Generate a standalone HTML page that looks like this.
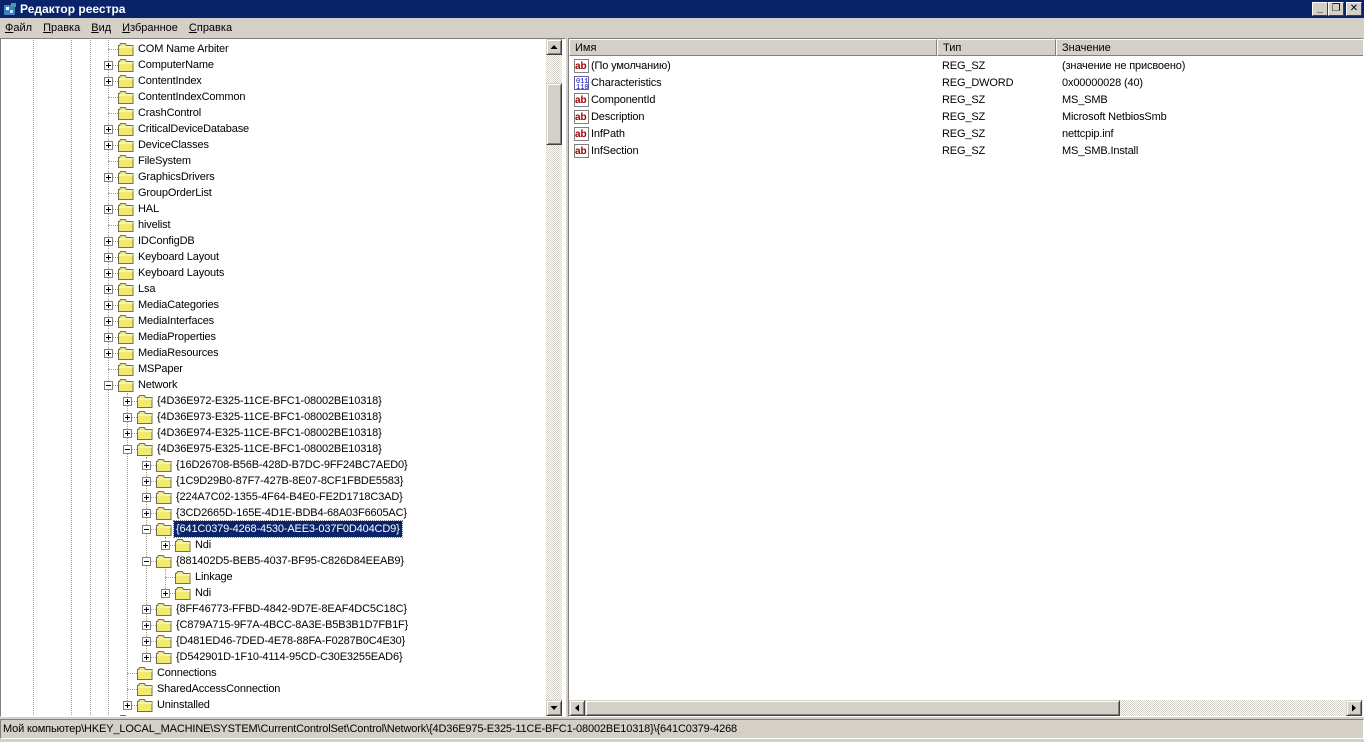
<!DOCTYPE html>
<html><head><meta charset="utf-8"><style>
*{margin:0;padding:0;box-sizing:border-box}
body{width:1364px;height:742px;background:#d4d0c8;font-family:"Liberation Sans","DejaVu Sans",sans-serif;font-size:11px;position:relative;overflow:hidden;color:#000}
.a{position:absolute}
#title{left:0;top:0;width:1364px;height:18px;background:#0a246a;color:#fff;font-weight:bold;font-size:12px;line-height:18px;padding-left:20px}
.wb{top:2px;width:16px;height:14px;background:#d4d0c8;border:1px solid;border-color:#fff #404040 #404040 #fff;font-size:10px;line-height:12px;text-align:center;color:#000;font-weight:bold}
#menu{top:18px;left:0;width:1364px;height:20px;line-height:20px}
#menu span{margin-left:5px;margin-right:6px}
#tree{left:0;top:38px;width:566px;height:679px;background:#fff;border:1px solid;border-color:#808080 #fff #fff #808080;overflow:hidden}
#list{left:568px;top:38px;width:796px;height:679px;background:#fff;border:1px solid;border-color:#808080 #fff #fff #808080;overflow:hidden}
.vl{position:absolute;width:1px;border-left:1px dotted #a0a0a0}
.hl{position:absolute;height:1px;border-top:1px dotted #a0a0a0}
.ex{position:absolute;width:9px;height:9px;border:1px solid #808080;background:#fff}
.ex i{position:absolute;left:1px;top:3px;width:5px;height:1px;background:#000}
.ex b{position:absolute;left:3px;top:1px;width:1px;height:5px;background:#000}
.fd{position:absolute;width:16px;height:13px}
.tx{position:absolute;white-space:nowrap;line-height:16px;height:16px;padding:0 2px;letter-spacing:-0.15px}
.sel{background:#0a246a;color:#fff;outline:1px dotted #808080}
.sb{background-color:#eeece8;background-image:repeating-conic-gradient(#d4d0c8 0 25%,#fff 0 50%);background-size:2px 2px}
.btn{position:absolute;background:#d4d0c8;border:1px solid;border-color:#d4d0c8 #404040 #404040 #d4d0c8;box-shadow:inset 1px 1px #fff,inset -1px -1px #808080}
.hd{position:absolute;top:0;height:17px;line-height:17px;background:#d4d0c8;border:1px solid;border-color:#fff #808080 #808080 #fff;padding-left:5px}
.row{position:absolute;line-height:16px;white-space:nowrap;letter-spacing:-0.15px}
#status{left:0;top:719px;width:1364px;height:20px;line-height:19px;padding-left:2px;border:1px solid;border-color:#808080 #fff #fff #808080;letter-spacing:-0.15px}
</style></head><body>
<div id="title" class="a">Редактор реестра</div>
<svg class="a" style="left:3px;top:2px" width="14" height="14"><rect x="1" y="3" width="11" height="10" fill="#4080c0"/><rect x="3" y="5" width="3" height="3" fill="#fff"/><rect x="7" y="8" width="3" height="3" fill="#c0e0ff"/><rect x="8" y="1" width="5" height="4" fill="#40a0a0"/></svg>
<div class="a wb" style="left:1312px">_</div>
<div class="a wb" style="left:1328px">&#x2750;</div>
<div class="a wb" style="left:1346px">✕</div>
<div id="menu" class="a"><span><u>Ф</u>айл</span><span><u>П</u>равка</span><span><u>В</u>ид</span><span><u>И</u>збранное</span><span><u>С</u>правка</span></div>
<div id="tree" class="a"></div>
<div id="list" class="a"></div>
<div id="status" class="a">Мой компьютер\HKEY_LOCAL_MACHINE\SYSTEM\CurrentControlSet\Control\Network\{4D36E975-E325-11CE-BFC1-08002BE10318}\{641C0379-4268</div>
<script>
var rows=[
[0,0,"COM Name Arbiter"],[0,1,"ComputerName"],[0,1,"ContentIndex"],[0,0,"ContentIndexCommon"],[0,0,"CrashControl"],[0,1,"CriticalDeviceDatabase"],[0,1,"DeviceClasses"],[0,0,"FileSystem"],[0,1,"GraphicsDrivers"],[0,0,"GroupOrderList"],[0,1,"HAL"],[0,0,"hivelist"],[0,1,"IDConfigDB"],[0,1,"Keyboard Layout"],[0,1,"Keyboard Layouts"],[0,1,"Lsa"],[0,1,"MediaCategories"],[0,1,"MediaInterfaces"],[0,1,"MediaProperties"],[0,1,"MediaResources"],[0,0,"MSPaper"],[0,2,"Network"],
[1,1,"{4D36E972-E325-11CE-BFC1-08002BE10318}"],[1,1,"{4D36E973-E325-11CE-BFC1-08002BE10318}"],[1,1,"{4D36E974-E325-11CE-BFC1-08002BE10318}"],[1,2,"{4D36E975-E325-11CE-BFC1-08002BE10318}"],
[2,1,"{16D26708-B56B-428D-B7DC-9FF24BC7AED0}"],[2,1,"{1C9D29B0-87F7-427B-8E07-8CF1FBDE5583}"],[2,1,"{224A7C02-1355-4F64-B4E0-FE2D1718C3AD}"],[2,1,"{3CD2665D-165E-4D1E-BDB4-68A03F6605AC}"],[2,2,"{641C0379-4268-4530-AEE3-037F0D404CD9}",1],
[3,1,"Ndi"],[2,2,"{881402D5-BEB5-4037-BF95-C826D84EEAB9}"],[3,0,"Linkage"],[3,1,"Ndi"],
[2,1,"{8FF46773-FFBD-4842-9D7E-8EAF4DC5C18C}"],[2,1,"{C879A715-9F7A-4BCC-8A3E-B5B3B1D7FB1F}"],[2,1,"{D481ED46-7DED-4E78-88FA-F0287B0C4E30}"],[2,1,"{D542901D-1F10-4114-95CD-C30E3255EAD6}"],
[1,0,"Connections"],[1,0,"SharedAccessConnection"],[1,1,"Uninstalled"],[0,0,""]];
var t=document.getElementById('tree'),h='';
function vl(x,y1,y2){h+='<div class="vl" style="left:'+(x-1)+'px;top:'+(y1-39)+'px;height:'+(y2-y1)+'px"></div>'}
vl(33,38,717);vl(71,38,717);vl(90,38,717);vl(108,38,717);
vl(127,393,705);vl(146,457,657);vl(165,537,545);vl(165,569,593);
rows.forEach(function(r,i){
 var y=41+16*i-39,cx=108+19*r[0]-1,cy=y+8;
 h+='<div class="hl" style="left:'+cx+'px;top:'+cy+'px;width:10px"></div>';
 if(r[1])h+='<div class="ex" style="left:'+(cx-4)+'px;top:'+(cy-4)+'px"><i></i>'+(r[1]==1?'<b></b>':'')+'</div>';
 var fx=cx+10;
 h+='<svg class="fd" style="left:'+fx+'px;top:'+(y+2)+'px" viewBox="0 0 16 13"><path d="M0.5 2.5h1l1-2h5l1 2h6.5v10h-14.5z" fill="#f2ea70" stroke="#707050"/><path d="M1 4h14" stroke="#fffff0"/></svg>';
 if(r[2])h+='<div class="tx'+(r[3]?' sel':'')+'" style="left:'+(fx+18)+'px;top:'+y+'px">'+r[2]+'</div>';
});
h+='<div class="a sb" style="left:545px;top:0;width:16px;height:677px"></div>';
h+='<div class="btn" style="left:545px;top:0;width:16px;height:16px"><svg width="14" height="14" style="position:absolute;left:0;top:0"><path d="M3.5 9h7l-3.5-4z" fill="#000"/></svg></div>';
h+='<div class="btn" style="left:545px;top:44px;width:16px;height:62px"></div>';
h+='<div class="btn" style="left:545px;top:661px;width:16px;height:16px"><svg width="14" height="14" style="position:absolute;left:0;top:0"><path d="M3.5 5h7l-3.5 4z" fill="#000"/></svg></div>';
t.innerHTML=h;
var l=document.getElementById('list'),g='';
g+='<div class="hd" style="left:0;width:368px">Имя</div><div class="hd" style="left:368px;width:119px">Тип</div><div class="hd" style="left:487px;width:310px">Значение</div>';
var items=[["(По умолчанию)","REG_SZ","(значение не присвоено)",0],["Characteristics","REG_DWORD","0x00000028 (40)",1],["ComponentId","REG_SZ","MS_SMB",0],["Description","REG_SZ","Microsoft NetbiosSmb",0],["InfPath","REG_SZ","nettcpip.inf",0],["InfSection","REG_SZ","MS_SMB.Install",0]];
items.forEach(function(it,i){var y=19+17*i;
 var ic=it[3]?'<svg width="16" height="16" style="position:absolute;left:5px;top:'+y+'px"><rect x="0.5" y="1.5" width="14" height="13" fill="#fff" stroke="#6060a0"/><text x="2" y="8" font-size="7" fill="#0000c0" font-family="Liberation Mono">011</text><text x="2" y="14" font-size="7" fill="#0000c0" font-family="Liberation Mono">110</text></svg>':'<svg width="16" height="16" style="position:absolute;left:5px;top:'+y+'px"><rect x="0.5" y="1.5" width="14" height="13" fill="#fff" stroke="#808080"/><text x="1" y="11" font-size="10" font-weight="bold" fill="#a00000" font-family="Liberation Sans">ab</text></svg>';
 g+=ic+'<div class="row" style="left:22px;top:'+y+'px">'+it[0]+'</div><div class="row" style="left:373px;top:'+y+'px">'+it[1]+'</div><div class="row" style="left:493px;top:'+y+'px">'+it[2]+'</div>';
});
g+='<div class="a sb" style="left:0;top:661px;width:794px;height:16px"></div>';
g+='<div class="btn" style="left:0;top:661px;width:16px;height:16px"><svg width="14" height="14" style="position:absolute;left:0;top:0"><path d="M9 3.5v7l-4-3.5z" fill="#000"/></svg></div>';
g+='<div class="btn" style="left:16px;top:661px;width:535px;height:16px"></div>';
g+='<div class="btn" style="left:777px;top:661px;width:16px;height:16px"><svg width="14" height="14" style="position:absolute;left:0;top:0"><path d="M5 3.5v7l4-3.5z" fill="#000"/></svg></div>';
l.innerHTML=g;
</script>
</body></html>
